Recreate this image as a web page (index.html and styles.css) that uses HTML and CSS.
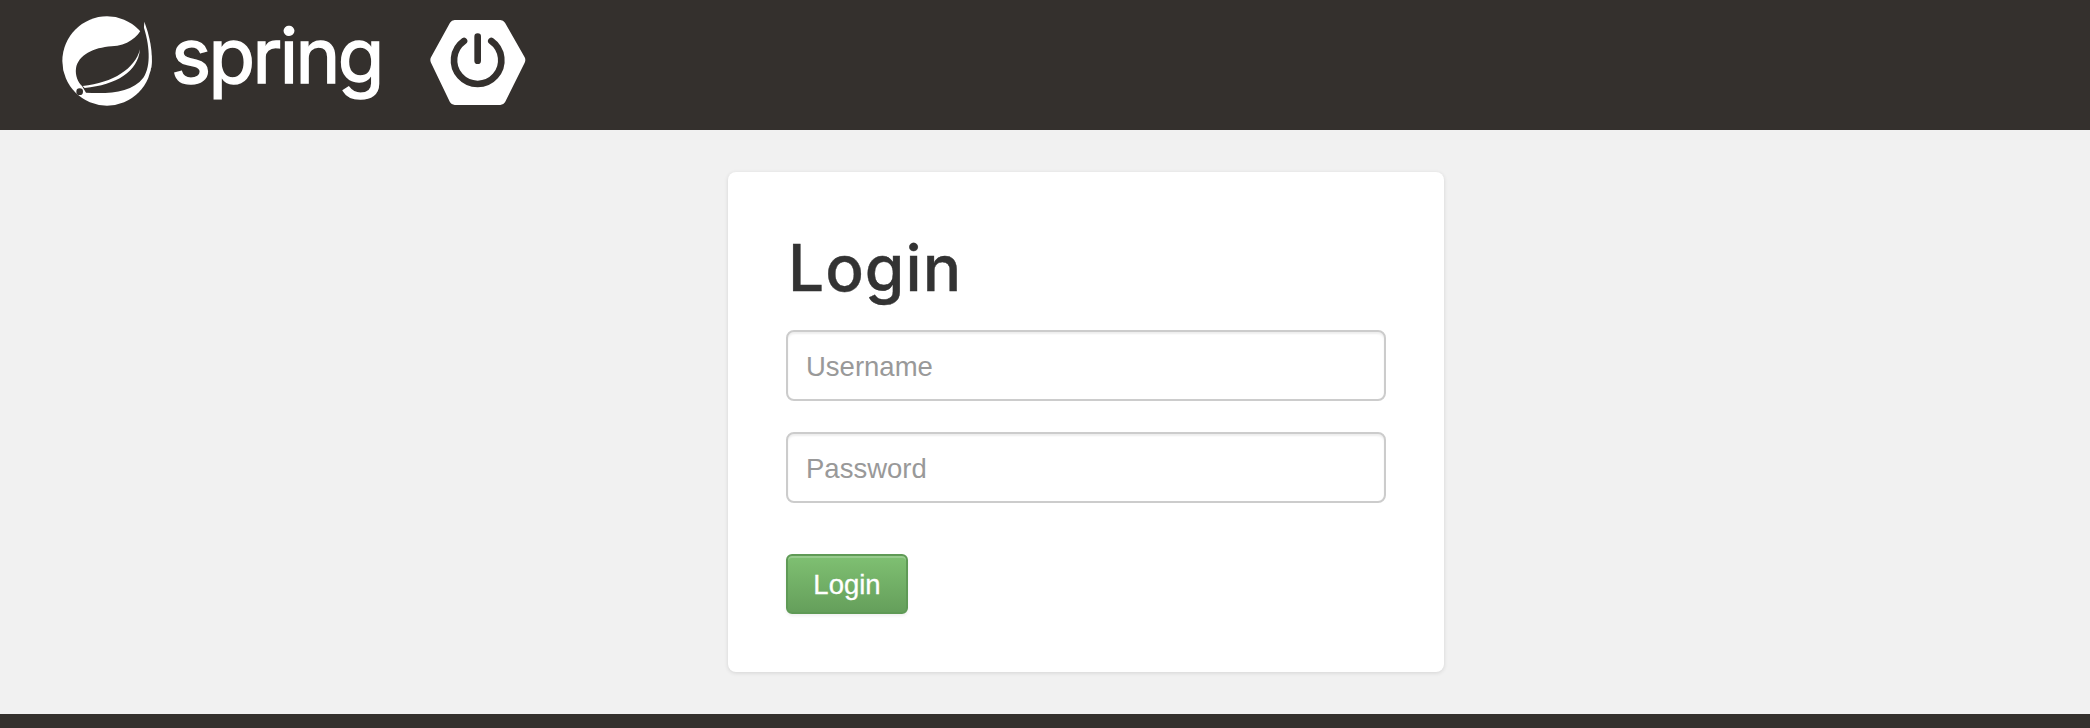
FILE: index.html
```html
<!DOCTYPE html>
<html lang="en">
<head>
    <meta charset="UTF-8">
    <meta name="viewport" content="width=device-width, initial-scale=1.0">
    <title>Login</title>
    <link rel="stylesheet" href="styles.css">
</head>
<body>
    <header class="site-header">
        <svg class="spring-leaf" viewBox="0 0 330 330" aria-hidden="true">
            <circle cx="171" cy="168" r="134" fill="#fff"/>
            <path d="M283 50 C298 90 310 140 304 190 L278 120 Z" fill="#fff"/>
            <path d="M280 62 C262 100 232 120 185 124 C130 128 85 150 78 190 C75 212 84 232 96 243 L108 263 C180 267 246 262 280 218 C305 182 298 116 280 62 Z" fill="#34302d"/>
            <path d="M270 133 C256 190 190 234 98 243 L104 249 C200 240 264 200 270 133 Z" fill="#fff"/>
            <circle cx="89" cy="260" r="10" fill="#34302d"/>
        </svg>
        <span class="spring-word">spring</span>
        <svg class="boot-logo" viewBox="0 0 345 300" aria-hidden="true">
            <path d="M104 30 H241 Q250 30 255 38 L314 142 Q318 150 314 158 L255 277 Q250 285 241 285 H104 Q95 285 90 277 L33 158 Q29 150 33 142 L90 38 Q95 30 104 30 Z" fill="#fff"/>
            <path d="M132 93 A71 71 0 1 0 214 93" fill="none" stroke="#34302d" stroke-width="20" stroke-linecap="round"/>
            <path d="M173 80 V152" fill="none" stroke="#34302d" stroke-width="20" stroke-linecap="round"/>
        </svg>
    </header>

    <main class="page-body">
        <form class="login-card">
            <h1 class="login-title">Login</h1>
            <input type="text" class="form-input" placeholder="Username">
            <input type="password" class="form-input" placeholder="Password">
            <button type="button" class="btn-login">Login</button>
        </form>
    </main>

    <footer class="site-footer"></footer>
</body>
</html>
```

FILE: styles.css
```css
html, body {
    height: 100%;
}

body {
    margin: 0;
    display: flex;
    flex-direction: column;
    height: 728px;
    overflow: hidden;
    background-color: #f1f1f1;
    font-family: "Liberation Sans", Arial, sans-serif;
}

.site-header {
    display: flex;
    align-items: flex-start;
    flex-shrink: 0;
    box-sizing: border-box;
    height: 130px;
    padding: 5px 0 0 50px;
    background-color: #34302d;
}

.spring-leaf {
    width: 110px;
    height: 110px;
    flex-shrink: 0;
}

.spring-word {
    width: 210px;
    margin-left: 11px;
    color: #fff;
    font-family: Inter, sans-serif;
    font-size: 76px;
    line-height: 100px;
    letter-spacing: -2.6px;
    -webkit-text-stroke: 1.5px #fff;
}

.boot-logo {
    width: 115px;
    height: 100px;
    margin: 5px 0 0 39px;
    flex-shrink: 0;
}

.page-body {
    flex: 1;
    padding: 42px 0 0 728px;
}

.login-card {
    display: flex;
    flex-direction: column;
    align-items: flex-start;
    box-sizing: border-box;
    width: 716px;
    height: 500px;
    padding: 52px 58px 0;
    background-color: #fff;
    border-radius: 8px;
    box-shadow: 0 1px 4px rgba(0, 0, 0, 0.12);
}

.login-title {
    margin: 0 0 18px 2px;
    color: #333;
    font-family: Inter, sans-serif;
    font-size: 64px;
    font-weight: 500;
    line-height: 88px;
    letter-spacing: 1px;
    -webkit-text-stroke: 0.4px #333;
}

.form-input {
    box-sizing: border-box;
    width: 600px;
    height: 71px;
    margin-bottom: 31px;
    padding: 3px 18px 0;
    border: 2px solid #ccc;
    border-radius: 8px;
    box-shadow: inset 0 2px 2px rgba(0, 0, 0, 0.07);
    color: #333;
    font-family: inherit;
    font-size: 27.5px;
}

.form-input::placeholder {
    color: #999;
    opacity: 1;
}

.btn-login {
    width: 122px;
    height: 60px;
    margin-top: 20px;
    padding: 2px 0 0;
    border: 2px solid #5f9a56;
    border-radius: 6px;
    background: linear-gradient(to bottom, #7fc072, #659f5b);
    box-shadow: inset 0 2px 0 rgba(255, 255, 255, 0.2), 0 2px 3px rgba(0, 0, 0, 0.06);
    color: #fff;
    font-family: inherit;
    font-size: 27.5px;
    -webkit-text-stroke: 0.3px #fff;
}

.site-footer {
    flex-shrink: 0;
    height: 14px;
    background-color: #34302d;
}
```
